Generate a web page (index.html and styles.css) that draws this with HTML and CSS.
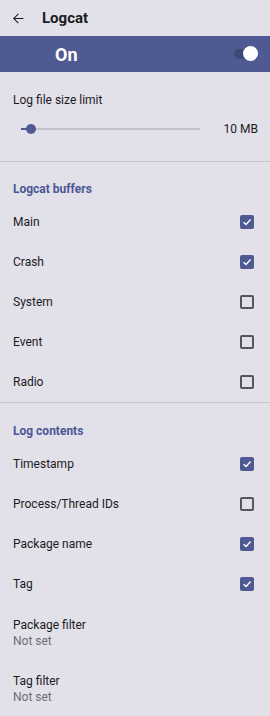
FILE: index.html
```html
<!DOCTYPE html>
<html lang="en">
<head>
    <meta charset="UTF-8">
    <meta name="viewport" content="width=device-width, initial-scale=1.0">
    <title>Logcat</title>
    <link rel="stylesheet" href="styles.css">
</head>
<body>
    <div class="topbar">
        <svg class="back" width="14" height="14" viewBox="0 0 24 24">
            <path d="M20 11.1H6.4l5.9-5.9L11.2 4 3.2 12l8 8 1.1-1.2-5.9-5.9H20v-1.8z" fill="#1c1b1f"/>
        </svg>
        <span class="title">Logcat</span>
    </div>
    <div class="banner">
        <span class="banner-label">On</span>
        <div class="switch"><div class="switch-thumb"></div></div>
    </div>

    <div class="size-block">
        <div class="size-title">Log file size limit</div>
        <div class="slider-row">
            <div class="slider">
                <div class="slider-fill"></div>
                <div class="slider-thumb"></div>
            </div>
            <span class="slider-value">10 MB</span>
        </div>
    </div>
    <div class="divider"></div>

    <div class="section-title">Logcat buffers</div>
    <div class="row"><span>Main</span><span class="check on"><svg viewBox="0 0 10 10"><path d="M1.6 5.2 L4 7.4 L8.6 2.6"/></svg></span></div>
    <div class="row"><span>Crash</span><span class="check on"><svg viewBox="0 0 10 10"><path d="M1.6 5.2 L4 7.4 L8.6 2.6"/></svg></span></div>
    <div class="row"><span>System</span><span class="check"></span></div>
    <div class="row"><span>Event</span><span class="check"></span></div>
    <div class="row"><span>Radio</span><span class="check"></span></div>
    <div class="divider"></div>

    <div class="section-title second">Log contents</div>
    <div class="row"><span>Timestamp</span><span class="check on"><svg viewBox="0 0 10 10"><path d="M1.6 5.2 L4 7.4 L8.6 2.6"/></svg></span></div>
    <div class="row"><span>Process/Thread IDs</span><span class="check"></span></div>
    <div class="row"><span>Package name</span><span class="check on"><svg viewBox="0 0 10 10"><path d="M1.6 5.2 L4 7.4 L8.6 2.6"/></svg></span></div>
    <div class="row"><span>Tag</span><span class="check on"><svg viewBox="0 0 10 10"><path d="M1.6 5.2 L4 7.4 L8.6 2.6"/></svg></span></div>

    <div class="filter">
        <div class="filter-title">Package filter</div>
        <div class="filter-sub">Not set</div>
    </div>
    <div class="filter">
        <div class="filter-title">Tag filter</div>
        <div class="filter-sub">Not set</div>
    </div>
</body>
</html>
```

FILE: styles.css
```css
body {
    margin: 0;
    background-color: #e2e0e8;
    color: #1c1b1f;
    font-family: Roboto, "Liberation Sans", sans-serif;
    font-size: 12px;
    overflow: hidden;
}

.topbar {
    height: 36px;
    display: flex;
    align-items: center;
    padding-left: 11px;
}

.back {
    width: 15px;
    height: 15px;
    margin-right: 16px;
}

.title {
    font-size: 15px;
    font-weight: 700;
}

.banner {
    height: 36px;
    background-color: #4e5a91;
    display: flex;
    align-items: center;
    justify-content: space-between;
    padding: 0 14px 0 55px;
}

.banner-label {
    color: #ffffff;
    font-size: 18px;
    font-weight: 700;
}

.switch {
    position: relative;
    width: 22px;
    height: 10px;
    border-radius: 5px;
    background-color: #3d4877;
}

.switch-thumb {
    position: absolute;
    right: -2px;
    top: -3px;
    width: 15px;
    height: 15px;
    border-radius: 50%;
    background-color: #ffffff;
}

.size-block {
    height: 89px;
    padding: 0 12px 0 13px;
}

.size-title {
    padding-top: 20px;
    line-height: 16px;
}

.slider-row {
    display: flex;
    align-items: center;
    margin-top: 13px;
    height: 16px;
}

.slider {
    position: relative;
    margin-left: 8px;
    width: 179px;
    height: 2px;
    background-color: #c2c0c9;
}

.slider-fill {
    width: 10px;
    height: 2px;
    background-color: #4e5a91;
}

.slider-thumb {
    position: absolute;
    left: 5px;
    top: -4px;
    width: 10px;
    height: 10px;
    border-radius: 50%;
    background-color: #4e5a91;
}

.slider-value {
    margin-left: auto;
}

.divider {
    height: 1px;
    background-color: #c8c6cf;
}

.section-title {
    height: 40px;
    line-height: 16px;
    padding: 19px 13px 0;
    box-sizing: border-box;
    color: #4b5795;
    font-weight: 700;
}

.section-title.second {
    height: 41px;
    padding-top: 20px;
}

.row {
    height: 40px;
    display: flex;
    align-items: center;
    justify-content: space-between;
    padding: 0 16px 0 13px;
}

.check {
    width: 10px;
    height: 10px;
    border: 2px solid #57555e;
    border-radius: 2px;
}

.check.on {
    border-color: #4e5a91;
    background-color: #4e5a91;
}

.check svg {
    display: block;
    width: 10px;
    height: 10px;
    fill: none;
    stroke: #ffffff;
    stroke-width: 1.4;
}

.filter {
    height: 56px;
    padding: 13px 13px 0;
    box-sizing: border-box;
}

.filter-title {
    line-height: 16px;
}

.filter-sub {
    line-height: 16px;
    color: #706e76;
}
```
